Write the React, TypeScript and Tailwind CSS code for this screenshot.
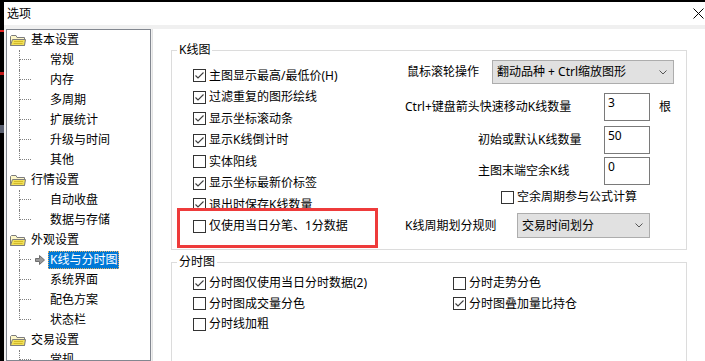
import type { ReactNode } from 'react';

const tree = [
  { name: '基本设置', items: ['常规', '内存', '多周期', '扩展统计', '升级与时间', '其他'] },
  { name: '行情设置', items: ['自动收盘', '数据与存储'] },
  { name: '外观设置', items: ['K线与分时图', '系统界面', '配色方案', '状态栏'] },
  { name: '交易设置', items: ['常规', '下单'] },
];

function Folder() {
  return (
    <svg width="16" height="13" viewBox="0 0 16 13" className="shrink-0">
      <path d="M0.5 2.5 V11.5 H14.5 V3.5 H7 L6 1.5 H1.5 Z" fill="#fdf6c8" stroke="#7d7d7d" />
      <path d="M0.5 11.5 L2.5 5.5 H15.5 L14.5 11.5 Z" fill="#f1e05a" stroke="#7d7d7d" />
      <path d="M4 7.5 H13 M3.5 9.5 H12.5" stroke="#d2b92a" />
    </svg>
  );
}

function Arrow() {
  return (
    <svg width="10" height="10" viewBox="0 0 10 10">
      <path d="M0.5 3.5 H4.5 V0.5 L9.5 5 L4.5 9.5 V6.5 H0.5 Z" fill="#9a9a9a" stroke="#6e6e6e" />
    </svg>
  );
}

function Check({ checked }: { checked?: boolean }) {
  return (
    <span className="w-[13px] h-[13px] border border-[#333] bg-white flex items-center justify-center shrink-0">
      {checked && (
        <svg width="11" height="11" viewBox="0 0 11 11">
          <path d="M1.5 5.5 L4 8 L9.5 2.5" fill="none" stroke="#3c3c3c" strokeWidth="1.1" />
        </svg>
      )}
    </span>
  );
}

function CheckRow({ label, checked, h = 'h-[21.5px]' }: { label: string; checked?: boolean; h?: string }) {
  return (
    <div className={`flex items-center ${h}`}>
      <Check checked={checked} />
      <span className="ml-[3px] whitespace-nowrap">{label}</span>
    </div>
  );
}

function Select({ children, w }: { children: ReactNode; w: string }) {
  return (
    <div className={`${w} h-full bg-[#e1e1e1] border border-[#adadad] flex items-center pl-[4px] pr-[6px]`}>
      <span className="flex-1 whitespace-nowrap">{children}</span>
      <svg width="8" height="5" viewBox="0 0 8 5">
        <path d="M0.5 0.5 L4 4 L7.5 0.5" fill="none" stroke="#555" />
      </svg>
    </div>
  );
}

function Edit({ value }: { value: string }) {
  return (
    <div className="w-[46px] h-[28px] border border-[#7a7a7a] bg-white pl-[3px] pt-[1px] leading-[16px]">
      {value}
    </div>
  );
}

export default function App() {
  return (
    <div className="w-[705px] h-[361px] overflow-hidden relative bg-black flex flex-col text-[12px] leading-[16px] text-black font-['Noto_Sans','Noto_Sans_CJK_SC',sans-serif]">
      <div className="h-[2px] shrink-0" />
      <div className="flex flex-1 min-h-0">
        <div className="w-[4px] shrink-0 flex flex-col">
          <span className="mt-[28px] h-[2px] bg-[#e02020]" />
          <span className="mt-[40px] h-[3px] bg-[#c01818]" />
          <span className="mt-[50px] h-[8px] bg-[#5a6070]" />
        </div>
        <div className="flex-1 flex flex-col bg-[#f0f0f0]">
          <div className="h-[23px] bg-white flex items-center pl-[3px] pr-[1px] shrink-0">
            <span className="flex-1">选项</span>
            <svg width="11" height="11" viewBox="0 0 11 11">
              <path d="M0.5 0.5 L10.5 10.5 M10.5 0.5 L0.5 10.5" stroke="#000" />
            </svg>
          </div>
          <div className="flex flex-1 pt-[4px] gap-[1px] min-h-0">
            <div className="ml-[2px] w-[145px] border border-[#828790] bg-white overflow-hidden">
              {tree.map((g) => (
                <div key={g.name}>
                  <div className="h-[20px] flex items-center pl-[3px]">
                    <Folder />
                    <span className="ml-[5px]">{g.name}</span>
                  </div>
                  {g.items.map((it, i) => {
                    const last = i === g.items.length - 1;
                    const sel = it === 'K线与分时图';
                    return (
                      <div key={it + i} className="h-[20px] flex items-center pl-[12px]">
                        <span className="w-[12px] self-stretch flex flex-col">
                          <span className="h-1/2 border-l border-b border-dotted border-[#808080]" />
                          {!last && <span className="h-1/2 border-l border-dotted border-[#808080]" />}
                        </span>
                        <span className="w-[17px] flex justify-center">{sel && <Arrow />}</span>
                        <span
                          className={
                            sel
                              ? 'h-[18px] flex items-center pl-[1px] pr-[1px] bg-[#0078d7] text-white border border-dotted border-[#e8b060]'
                              : 'h-[18px] flex items-center pl-[1px] pr-[1px] border border-transparent'
                          }
                        >
                          {it}
                        </span>
                      </div>
                    );
                  })}
                </div>
              ))}
            </div>

            <div className="flex-1 bg-white border-l border-[#e3e3e3] flex flex-col">
              <fieldset className="mx-[18px] mt-[13px] border border-[#dcdcdc]">
                <legend className="ml-[5px] px-[2px] leading-[16px]">K线图</legend>
                <div className="h-[191px] flex">
                  <div className="w-[233px] pl-[21px] pt-[7px]">
                    <CheckRow label="主图显示最高/最低价(H)" checked />
                    <CheckRow label="过滤重复的图形绘线" checked />
                    <CheckRow label="显示坐标滚动条" checked />
                    <CheckRow label="显示K线倒计时" checked />
                    <CheckRow label="实体阳线" />
                    <CheckRow label="显示坐标最新价标签" checked />
                    <CheckRow label="退出时保存K线数量" checked />
                    <CheckRow label="仅使用当日分笔、1分数据" />
                  </div>
                  <div className="flex flex-col">
                    <div className="mt-[2px] h-[24px] flex items-center">
                      <span className="w-[87px] pl-[2px]">鼠标滚轮操作</span>
                      <Select w="w-[182px]">翻动品种 + Ctrl缩放图形</Select>
                    </div>
                    <div className="mt-[9px] flex items-center">
                      <span className="w-[199px] whitespace-nowrap">Ctrl+键盘箭头快速移动K线数量</span>
                      <Edit value="3" />
                      <span className="ml-[9px]">根</span>
                    </div>
                    <div className="mt-[5px] flex items-center">
                      <span className="w-[199px] pl-[73px]">初始或默认K线数量</span>
                      <Edit value="50" />
                    </div>
                    <div className="mt-[3px] flex items-center">
                      <span className="w-[199px] pl-[73px]">主图末端空余K线</span>
                      <Edit value="0" />
                    </div>
                    <div className="mt-[5px] pl-[96px]">
                      <CheckRow label="空余周期参与公式计算" h="h-[14px]" />
                    </div>
                    <div className="mt-[9px] h-[25px] flex items-center">
                      <span className="w-[112px]">K线周期划分规则</span>
                      <Select w="w-[133px]">交易时间划分</Select>
                    </div>
                  </div>
                </div>
              </fieldset>

              <fieldset className="mx-[18px] mt-[4px] border border-[#dcdcdc]">
                <legend className="ml-[5px] px-[2px] leading-[16px]">分时图</legend>
                <div className="h-[120px] pt-[3px] pl-[21px] grid grid-cols-[260px_1fr] content-start">
                  <CheckRow label="分时图仅使用当日分时数据(2)" checked h="h-[20.5px]" />
                  <CheckRow label="分时走势分色" h="h-[20.5px]" />
                  <CheckRow label="分时图成交量分色" h="h-[20.5px]" />
                  <CheckRow label="分时图叠加量比持仓" checked h="h-[20.5px]" />
                  <CheckRow label="分时线加粗" h="h-[20.5px]" />
                </div>
              </fieldset>
            </div>
          </div>
        </div>
      </div>

      <div className="absolute left-[177px] top-[208px] w-[201px] h-[40px] border-[3px] border-[#ee3b3b]" />
    </div>
  );
}
